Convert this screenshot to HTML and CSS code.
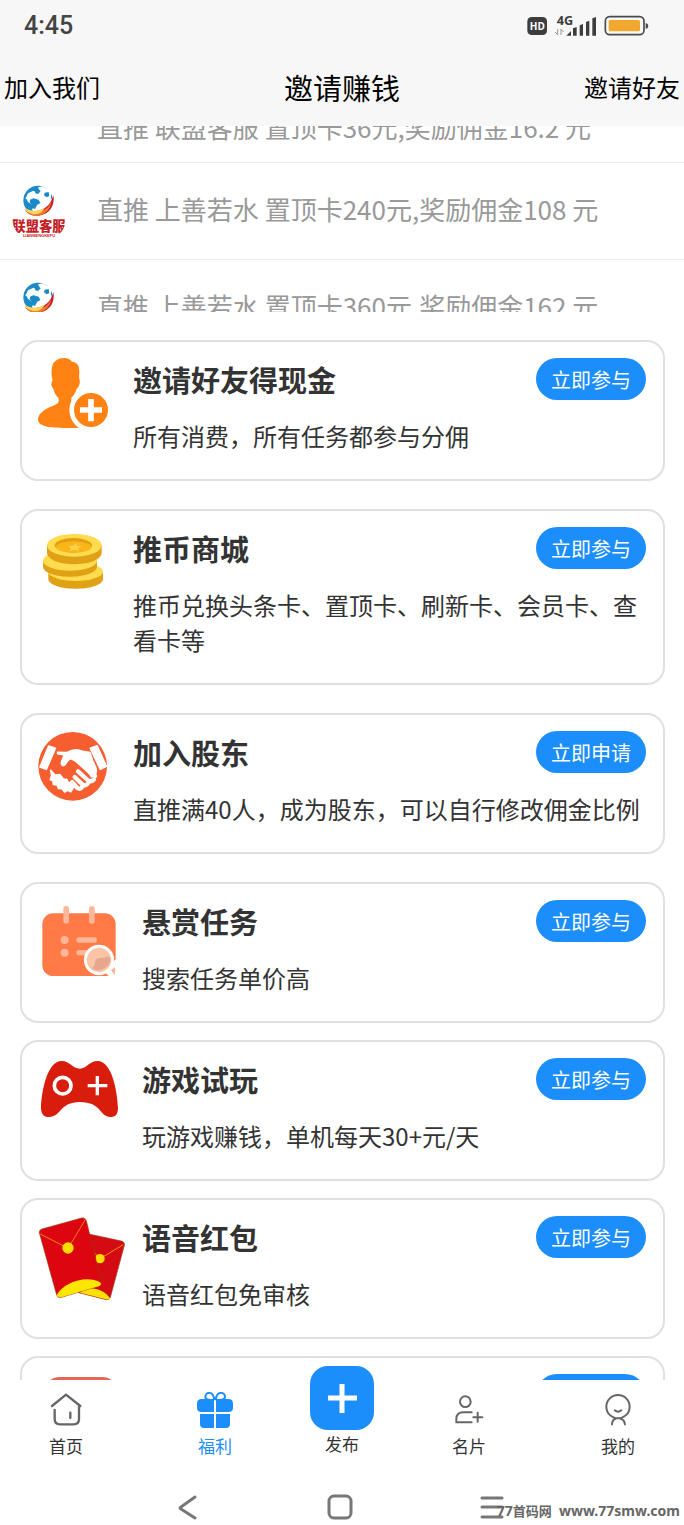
FILE: index.html
```html
<!DOCTYPE html>
<html lang="zh-CN">
<head>
<meta charset="UTF-8">
<meta name="viewport" content="width=device-width, initial-scale=1">
<title>邀请赚钱</title>
<link rel="stylesheet" href="styles.css">
</head>
<body>

<!-- shared symbols -->
<svg class="defs" aria-hidden="true">
  <symbol id="union-logo" viewBox="36 57 162 192">
    <clipPath id="logo-cut"><path d="M36 50H198V185Q190 215 168 233H64Q44 212 36 185Z"/></clipPath>
    <circle cx="114" cy="121" r="44" fill="#1b8ac8"/>
    <path d="M76 116l8-16 16-8 8 4 10-6-4-8 14-3 10 6 10 3 8 12-4 10 4 12-6 16-10 14-10 4-14-2-6 6-10-2-4-10 6-8-8-8-10-6-4-8z" fill="#fff"/>
    <path d="M90 119l10-4 16 4 5 10-10 6-6 12-6-2-3-10-7-8z" fill="#1b8ac8"/>
    <path d="M104 92l12-4 6 6-8 8-8-2zM134 98l12-2 2 12-8 4-8-6z" fill="#1b8ac8"/>
    <path d="M160 105c6 30-10 58-44 62-18 2-32-5-40-15 50 8 76-12 84-47z" fill="#c8202c"/>
    <path d="M153 126c-8 22-28 32-52 31-14-1-22-5-27-10 8 20 38 26 56 15 13-8 22-20 23-36z" fill="#f07c2a"/>
    <path d="M74 143c18 12 42 12 60 0-8 20-34 26-54 11z" fill="#fbd65c"/>
    <g clip-path="url(#logo-cut)" fill="#c41f27">
      <text class="logo-name" x="117" y="214" text-anchor="middle">联盟客服</text>
      <text class="logo-latin" x="117" y="231" text-anchor="middle">LIANMENGKEFU</text>
    </g>
  </symbol>
</svg>

<header class="top">
  <div class="status">
    <span class="time">4:45</span>
    <svg class="status-icons" viewBox="556 42 366 66" role="img" aria-label="信号与电量">
      <rect x="557" y="48" width="59" height="54" rx="13" fill="#3d3d3d"/>
      <text class="hd" x="587" y="86" text-anchor="middle">HD</text>
      <text class="net" x="670" y="73" text-anchor="middle">4G</text>
      <path d="M648 84v18M648 101l-8-8M658 102V84M658 85l8 8" stroke="#999" stroke-width="3" fill="none"/>
      <path d="M674 104l14-14v14zM694 82l11-4v26h-11zM714 73l10-4v35h-10zM733 63l10-4v45h-10zM752 52l11-4v56h-11z" fill="#3d3d3d"/>
      <rect x="791" y="47" width="116" height="54" rx="13" fill="none" stroke="#4a4a4a" stroke-width="5"/>
      <rect x="801" y="57" width="94" height="34" rx="5" fill="#f0a92e"/>
      <path d="M912 66q8 2 8 9t-8 9z" fill="#4a4a4a"/>
    </svg>
  </div>
  <nav class="navbar">
    <a href="#join">加入我们</a>
    <h1>邀请赚钱</h1>
    <a href="#invite">邀请好友</a>
  </nav>
</header>

<main>
  <section class="feed">
    <ul>
      <li><span class="avatar"></span><p>直推 联盟客服 置顶卡36元,奖励佣金16.2 元</p></li>
      <li><svg class="avatar"><use href="#union-logo"/></svg><p>直推 上善若水 置顶卡240元,奖励佣金108 元</p></li>
      <li><svg class="avatar"><use href="#union-logo"/></svg><p>直推 上善若水 置顶卡360元,奖励佣金162 元</p></li>
    </ul>
  </section>

  <section class="cards">
    <article class="card">
      <svg class="icon" viewBox="114 84 213 213">
        <path d="M190 84C205 84 212 89 216 95C232 96 238 108 238 125C238 136 236 142 239 150C241 160 237 171 230 177C226 190 220 198 214 203V210L240 293C205 295 165 293 142 290Q114 286 114 268C115 246 146 232 163 226C178 220 178 211 175 203C168 197 162 186 160 176C154 170 152 159 158 150C153 135 154 116 158 104C163 92 175 85 190 84Z" fill="#ff8213"/>
        <circle cx="273" cy="240" r="65" fill="#fff"/>
        <circle cx="273" cy="240" r="51" fill="#ff8213"/>
        <path d="M240 240h66M273 207v67" stroke="#fff" stroke-width="17"/>
      </svg>
      <div class="info">
        <div class="head"><h2>邀请好友得现金</h2><button type="button">立即参与</button></div>
        <p>所有消费，所有任务都参与分佣</p>
      </div>
    </article>

    <article class="card">
      <svg class="icon" viewBox="114 81 213 213">
        <path d="M145 216v22c6 38 158 38 164 0v-24z" fill="#e0a114"/>
        <ellipse cx="227" cy="215" rx="82" ry="28" fill="#ffdb50"/>
        <path d="M129 184v16c4 40 157 40 162 0v-18z" fill="#e0a114"/>
        <ellipse cx="210" cy="182" rx="81" ry="30" fill="#ffdb50"/>
        <path d="M141 135v24c6 45 158 45 164 0v-24z" fill="#e0a114"/>
        <ellipse cx="223" cy="136" rx="82" ry="34" fill="#ffdb50"/>
        <ellipse cx="220" cy="136" rx="56" ry="22" fill="#e39f10"/>
        <ellipse cx="221" cy="141" rx="53" ry="17" fill="#f8b619"/>
        <path d="M228 129l3 8 15 2-11 5 1 9-12-4-15 4 4-9-10-5 16-2z" fill="#ffd04a"/>
      </svg>
      <div class="info">
        <div class="head"><h2>推币商城</h2><button type="button">立即参与</button></div>
        <p>推币兑换头条卡、置顶卡、刷新卡、会员卡、查看卡等</p>
      </div>
    </article>

    <article class="card">
      <svg class="icon" viewBox="114 90 213 213">
        <circle cx="218" cy="196" r="103" fill="#f65d2f"/>
        <g fill="#fff" stroke="#fff" stroke-width="5" stroke-linejoin="round">
          <path d="M146 135l20 7-27 63-19-7zM271 142l20-8 28 62-18 9z"/>
          <path d="M173 154l27 1c14-8 30-11 44-5l26 5 7 22c5 13 12 21 12 33-1 12-8 18-15 17-3-9-22-24-35-36-12-10-18-17-28-18-9 3-10 12-18 20-8 3-12-4-6-17l6-14-20-4z"/>
          <path d="M152 208l13 14 15-1 10 13 10 1 5 10 11 2 5 12-9 13-10-4-8 5-8-10-11-1-3-10-12-2-1-12-8-2 4-13z"/>
        </g>
        <path d="M234 211l29 26q11 8 19-2M224 228l23 22q10 7 16-2M216 243l16 18q9 6 15-4" fill="none" stroke="#fff" stroke-width="13" stroke-linecap="round" stroke-linejoin="round"/>
        <path d="M262 196l24 29" stroke="#fff" stroke-width="12" stroke-linecap="round"/>
      </svg>
      <div class="info">
        <div class="head"><h2>加入股东</h2><button type="button">立即申请</button></div>
        <p>直推满40人，成为股东，可以自行修改佣金比例</p>
      </div>
    </article>
  </section>

  <section class="cards tasks">
    <article class="card">
      <svg class="icon" viewBox="114 57 240 240">
        <rect x="127" y="97" width="220" height="188" rx="32" fill="#ff7a47"/>
        <g fill="#ffb798">
          <rect x="190" y="75" width="17" height="53" rx="8"/>
          <rect x="267" y="75" width="17" height="53" rx="8"/>
          <circle cx="194" cy="177" r="12"/>
          <circle cx="194" cy="215" r="12"/>
          <rect x="229" y="169" width="62" height="16" rx="8"/>
          <rect x="229" y="207" width="50" height="16" rx="8"/>
        </g>
        <path d="M312 272l16 14h20v-52z" fill="#fff"/>
        <path d="M333 268l12 15v-24z" fill="#f8b396"/>
        <circle cx="297" cy="237" r="41" fill="#fbc3a8" stroke="#fff" stroke-width="9"/>
        <path d="M276 262c16 12 44 4 54-20q2-12-5-16c-14 8-28 0-38 12-4 8 0 16-11 24z" fill="#e6a78c"/>
      </svg>
      <div class="info">
        <div class="head"><h2>悬赏任务</h2><button type="button">立即参与</button></div>
        <p>搜索任务单价高</p>
      </div>
    </article>

    <article class="card">
      <svg class="icon" viewBox="114 66 240 240">
        <path d="M185 75C210 75 217 98 240 98C260 98 268 75 292 75C338 75 352 172 354 215C354 235 345 243 331 243C299 243 305 198 240 198C178 198 184 243 147 243C130 243 123 232 123 215C124 172 140 75 185 75Z" fill="#d91d0c"/>
        <circle cx="188" cy="149" r="25" fill="none" stroke="#fff" stroke-width="11"/>
        <path d="M263 149h59M292 120v58" stroke="#fff" stroke-width="10"/>
      </svg>
      <div class="info">
        <div class="head"><h2>游戏试玩</h2><button type="button">立即参与</button></div>
        <p>玩游戏赚钱，单机每天30+元/天</p>
      </div>
    </article>

    <article class="card">
      <svg class="icon" viewBox="114 78 240 240">
        <path d="M256 130l108 23q11 3 9 13l-42 156q-3 9-12 7l-83-21z" fill="#d50b14" stroke="#9c3b12" stroke-width="2"/>
        <path d="M240 308c20-24 70-14 90 17q-4 5-12 3z" fill="#ffe000"/>
        <path d="M285 190l15 16 70-42" fill="none" stroke="#f08a1c" stroke-width="3"/>
        <circle cx="300" cy="206" r="14" fill="#ffdd00"/>
        <path d="M126 117l119-33q11-2 14 8l45 185q2 8-7 11l-113 34q-10 3-14-7L118 128q-1-8 8-11z" fill="#dc0510" stroke="#9c3b12" stroke-width="2"/>
        <path d="M170 316c20-40 92-62 132-38 2 5-1 9-6 11l-112 33q-9 2-14-6z" fill="#ffe600"/>
        <path d="M121 132l83 43 52-86" fill="none" stroke="#f0801c" stroke-width="3"/>
        <circle cx="204" cy="174" r="17" fill="#ffdd00"/>
      </svg>
      <div class="info">
        <div class="head"><h2>语音红包</h2><button type="button">立即参与</button></div>
        <p>语音红包免审核</p>
      </div>
    </article>

    <article class="card">
      <svg class="icon" viewBox="0 0 80 80">
        <rect x="7" y="3" width="72" height="70" rx="14" fill="#e4655a"/>
      </svg>
      <div class="info">
        <div class="head"><h2></h2><button type="button">立即参与</button></div>
        <p></p>
      </div>
    </article>
  </section>
</main>

<nav class="tabbar">
  <a href="#home">
    <svg viewBox="146 141 108 108" fill="none" stroke="#666" stroke-width="7" stroke-linecap="round" stroke-linejoin="round">
      <path d="M158 183l42-34 43 34M166 195v27q0 16 16 16h41q16 0 16-16v-39M213 203v16"/>
    </svg>
    <span>首页</span>
  </a>
  <a href="#welfare" class="active">
    <svg viewBox="594 141 108 108">
      <path d="M646 165c-8 0-27 1-27-9 0-16 24-20 27 9zM650 165c8 0 28 1 28-9 0-16-25-20-28 9z" fill="#fff" stroke="#1b8efb" stroke-width="6"/>
      <path d="M608 162h80q14 0 14 14v12q0 13-14 13h-80q-14 0-14-13v-12q0-14 14-14zM603 207h90v30q0 12-12 12h-66q-12 0-12-12z" fill="#1b8efb"/>
      <path d="M648 166v83" stroke="#fff" stroke-width="6"/>
    </svg>
    <span>福利</span>
  </a>
  <a href="#publish" class="publish">
    <svg viewBox="0 0 64 64">
      <rect width="64" height="64" rx="18" fill="#1b8efb"/>
      <path d="M18 32h29M32 18v29" stroke="#fff" stroke-width="5"/>
    </svg>
    <span>发布</span>
  </a>
  <a href="#card">
    <svg viewBox="324 141 108 108" fill="none" stroke="#666" stroke-width="6" stroke-linecap="round" stroke-linejoin="round">
      <circle cx="367" cy="170" r="16"/>
      <path d="M386 202h-25q-21 0-21 20v10h46M404 203v27M391 217h27"/>
    </svg>
    <span>名片</span>
  </a>
  <a href="#mine">
    <svg viewBox="773 141 108 108" fill="none" stroke="#666" stroke-width="6" stroke-linecap="round" stroke-linejoin="round">
      <circle cx="827" cy="185" r="35"/>
      <path d="M817 196q10 8 20 0M820 221q-10 2-11 17M834 221q12 2 14 17"/>
    </svg>
    <span>我的</span>
  </a>
</nav>

<footer class="sysnav">
  <button type="button" aria-label="返回">
    <svg viewBox="0 0 24 26"><path d="M19 3L5 13q-2 1 0 2l14 9"/></svg>
  </button>
  <button type="button" aria-label="主屏幕">
    <svg viewBox="0 0 24 26"><rect x="1" y="2" width="22" height="22" rx="5"/></svg>
  </button>
  <button type="button" aria-label="菜单">
    <svg viewBox="0 0 24 26"><path d="M2 4h20M2 13h20M2 23h20"/></svg>
  </button>
  <p class="watermark">77<span>首码网</span>&nbsp; www.77smw.com</p>
</footer>

</body>
</html>
```
FILE: styles.css
```css
* {
  box-sizing: border-box;
  margin: 0;
  padding: 0;
}
body {
  display: flex;
  flex-direction: column;
  height: 100vh;
  background: #fff;
  color: #333;
  font-family: "Noto Sans CJK SC", "Noto Sans", sans-serif;
}
a {
  color: inherit;
  text-decoration: none;
}
button {
  border: none;
  font-family: inherit;
  cursor: pointer;
}
.defs {
  position: absolute;
  width: 0;
  height: 0;
}

/* header */
.top {
  flex: none;
  background: #f7f7f7;
  color: #000;
}
.status {
  display: flex;
  align-items: center;
  justify-content: space-between;
  height: 51px;
  padding: 0 35px 0 24px;
}
.time {
  font: 500 25px Roboto, sans-serif;
  color: #444;
}
.status-icons {
  width: 122px;
  height: 22px;
}
.hd {
  font: bold 30px "Open Sans", sans-serif;
  fill: #fff;
}
.net {
  font: bold 38px "Open Sans", sans-serif;
  fill: #3d3d3d;
}
.navbar {
  display: grid;
  grid-template-columns: 1fr auto 1fr;
  align-items: center;
  height: 75px;
  padding: 0 4px 4px;
  font-size: 24px;
}
.navbar a:last-child {
  text-align: right;
}
.navbar h1 {
  font-size: 29px;
  font-weight: 400;
}

/* reward feed */
main {
  flex: 1;
  min-height: 0;
  overflow: hidden;
}
.feed {
  height: 186px;
  overflow: hidden;
}
.feed ul {
  margin-top: -30px;
  list-style: none;
}
.feed li {
  display: flex;
  align-items: center;
  gap: 31px;
  padding: 16px 12px;
  border-bottom: 1px solid #eaeaea;
}
.feed p {
  padding-bottom: 4px;
  font-size: 26px;
  line-height: 30px;
  color: #999;
  white-space: nowrap;
}
.avatar {
  flex: none;
  width: 54px;
}
svg.avatar {
  height: 64px;
}
.logo-name {
  font-size: 40px;
  font-weight: 900;
}
.logo-latin {
  font: bold 12px "Liberation Sans", sans-serif;
}

/* cards */
.cards {
  display: grid;
  gap: 28px;
  padding: 28px 19px 0 20px;
}
.tasks {
  gap: 17px;
}
.card {
  display: flex;
  gap: 24px;
  padding: 16px 17px 26px 16px;
  border: 2px solid #e0e0e0;
  border-radius: 18px;
}
.icon {
  flex: none;
  width: 71px;
  height: 71px;
  overflow: visible;
}
.tasks .icon {
  width: 80px;
  height: 80px;
}
.info {
  flex: 1;
}
.head {
  display: flex;
  justify-content: space-between;
  height: 42px;
  margin-bottom: 18px;
}
.head h2 {
  font-size: 29px;
  line-height: 42px;
}
.head button {
  width: 110px;
  height: 42px;
  border-radius: 21px;
  background: #1b8efb;
  color: #fff;
  font-size: 20px;
}
.info p {
  min-height: 35px;
  font-size: 24px;
  line-height: 35px;
}

/* bottom tabs */
.tabbar {
  flex: none;
  display: grid;
  grid-template-columns: 132fr 166fr 88fr 166fr 132fr;
  height: 109px;
  background: #fff;
}
.tabbar a {
  display: flex;
  flex-direction: column;
  align-items: center;
  gap: 6px;
  padding-top: 12px;
  font-size: 17px;
  line-height: 24px;
}
.tabbar svg {
  width: 36px;
  height: 36px;
}
.tabbar .active {
  color: #1b8efb;
}
.tabbar .publish {
  gap: 2px;
  margin-top: -14px;
  padding-top: 0;
}
.tabbar .publish svg {
  width: 64px;
  height: 64px;
}

/* system buttons */
.sysnav {
  flex: none;
  position: relative;
  display: flex;
  justify-content: center;
  gap: 126px;
  height: 36px;
  padding: 5px 4px 0 0;
}
.sysnav button {
  width: 26px;
  height: 26px;
  background: none;
}
.sysnav svg {
  display: block;
  width: 26px;
  height: 26px;
  fill: none;
  stroke: #777;
  stroke-width: 3;
  stroke-linecap: round;
}
.watermark {
  position: absolute;
  right: 4px;
  bottom: 4px;
  font: bold 14px/20px "Noto Sans", "Noto Sans CJK SC", sans-serif;
  color: #666;
}
.watermark span {
  font-size: 13px;
}
```
